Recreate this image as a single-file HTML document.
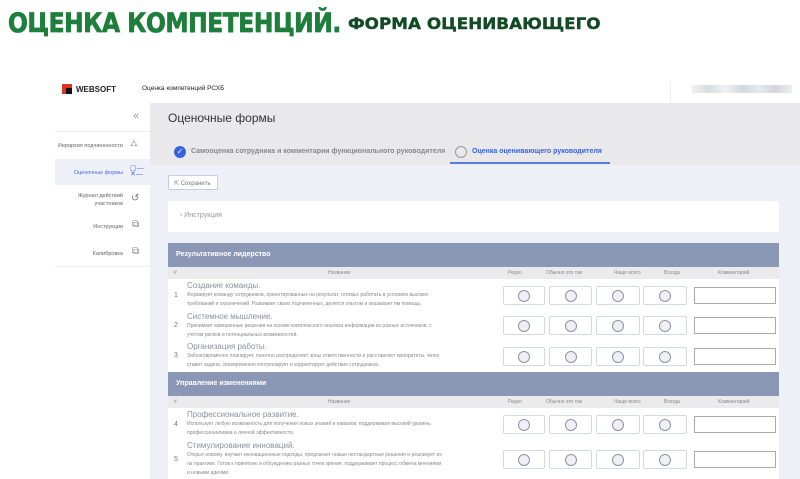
<!DOCTYPE html>
<html><head><meta charset="utf-8"><style>
*{margin:0;padding:0;box-sizing:border-box}
body{width:800px;height:479px;overflow:hidden;background:#fff;font-family:"Liberation Sans","DejaVu Sans",sans-serif;position:relative}
.a{position:absolute}
.t1{left:8px;top:8px;font-size:27px;font-weight:900;color:#1e7f3c;letter-spacing:-0.5px;white-space:nowrap;font-family:"DejaVu Sans","Liberation Sans",sans-serif;transform:scaleX(0.865);transform-origin:0 0;-webkit-text-stroke:0.8px #1e7f3c}
.t2{left:348px;top:14px;font-size:16px;font-weight:900;color:#124a26;white-space:nowrap;font-family:"DejaVu Sans","Liberation Sans",sans-serif;transform:scaleX(1.05);transform-origin:0 0;-webkit-text-stroke:0.4px #124a26}
.sb{font-size:5.5px;color:#666;text-align:right;white-space:nowrap}
.cell{position:absolute;height:19px;border:1px solid #d4d8e2;background:#fff;border-radius:2px}
.cell i{position:absolute;left:50%;top:50%;width:12px;height:12px;margin:-6px 0 0 -6px;border:1.3px solid #8c93a5;border-radius:50%;background:#eef0f5}
.cm{position:absolute;height:17px;border:1px solid #aaa;background:#fff}
.sec{position:absolute;left:168px;width:611px;height:24px;background:#8a97b5;color:#fff;font-size:7px;font-weight:bold;padding:8px 0 0 8px}
.ch{position:absolute;left:168px;width:611px;height:12px;background:#ebebed;font-size:5px;color:#888}
.ch span{position:absolute;top:3px}
.row{position:absolute;left:168px;width:611px;background:#fff}
.n{position:absolute;left:6px;font-size:7px;color:#777}
.h{position:absolute;left:19px;font-size:8px;color:#8a8f9a}
.d{position:absolute;left:19px;font-size:5px;color:#888;line-height:9px;width:255px}
</style></head><body>
<div class="a t1">ОЦЕНКА КОМПЕТЕНЦИЙ.</div>
<div class="a t2">ФОРМА ОЦЕНИВАЮЩЕГО</div>

<div class="a" style="left:62px;top:84px;width:10px;height:10px;background:#d32">
<div class="a" style="left:4px;top:4px;width:6px;height:6px;background:#111"></div></div>
<div class="a" style="left:76px;top:85px;font-size:8px;font-weight:bold;color:#222">WEBSOFT</div>
<div class="a" style="left:142px;top:85px;font-size:6.5px;color:#222">Оценка компетенций РСХБ</div>
<div class="a" style="left:670px;top:81px;width:1px;height:22px;background:#eee"></div>
<div class="a" style="left:692px;top:85px;width:100px;height:8px;background:linear-gradient(90deg,#eef1f2,#d8dde0,#f0f2f4,#d3d8de,#e6e9ec,#d2d6df,#eceef0)"></div>

<div class="a" style="left:55px;top:103px;width:95px;height:376px;background:#fff"></div>
<div class="a" style="left:133px;top:110px;font-size:11px;color:#999">«</div>
<div class="a" style="left:55px;top:131px;width:95px;height:1px;background:#eceef4"></div>
<div class="a" style="left:55px;top:159px;width:95px;height:26px;background:#eef0f8"></div>
<div class="a sb" style="left:55px;top:143px;width:68px">Иерархия подчиненности</div>
<div class="a" style="left:130px;top:138px;font-size:10px;color:#888">⛼</div>
<div class="a sb" style="left:55px;top:170px;width:68px;color:#4a6ae0">Оценочные формы</div>
<div class="a" style="left:130px;top:166px;font-size:7px;color:#4a6ae0;line-height:6px">▢—<br>✕—</div>
<div class="a sb" style="left:55px;top:192px;width:68px;line-height:8px">Журнал действий<br>участников</div>
<div class="a" style="left:131px;top:193px;font-size:10px;color:#777">↺</div>
<div class="a sb" style="left:55px;top:224px;width:68px">Инструкции</div>
<div class="a" style="left:132px;top:219px;font-size:10px;color:#888">⧉</div>
<div class="a sb" style="left:55px;top:251px;width:68px">Калибровка</div>
<div class="a" style="left:132px;top:246px;font-size:10px;color:#888">⧉</div>
<div class="a" style="left:55px;top:266px;width:95px;height:1px;background:#eceef4"></div>

<div class="a" style="left:150px;top:103px;width:650px;height:62px;background:#e9e9eb"></div>
<div class="a" style="left:150px;top:165px;width:650px;height:314px;background:#eef0f8"></div>
<div class="a" style="left:168px;top:111px;font-size:12px;color:#333">Оценочные формы</div>
<div class="a" style="left:174px;top:146px;width:12px;height:12px;border-radius:50%;background:#3a62e0;color:#fff;font-size:8px;text-align:center;line-height:12px">✓</div>
<div class="a" style="left:191px;top:148px;font-size:7px;font-weight:bold;color:#888">Самооценка сотрудника и комментарии функционального руководителя</div>
<div class="a" style="left:455px;top:146px;width:12px;height:12px;border-radius:50%;border:1.2px solid #999"></div>
<div class="a" style="left:472px;top:148px;font-size:7px;font-weight:bold;color:#3a62e0">Оценка оценивающего руководителя</div>
<div class="a" style="left:450px;top:162px;width:160px;height:1.5px;background:#5a7ae0"></div>

<div class="a" style="left:168px;top:175px;width:50px;height:15px;border:1px solid #c8ccd6;background:#fff;border-radius:2px;font-size:6px;color:#777;padding:4px 0 0 5px">⇱ Сохранить</div>
<div class="a" style="left:168px;top:201px;width:611px;height:31px;background:#fff;font-size:7px;color:#999;padding:11px 0 0 12px">› Инструкция</div>

<div class="sec" style="top:243px">Результативное лидерство</div>
<div class="ch" style="top:267px"><span style="left:6px">#</span><span style="left:160px">Название</span><span style="left:340px">Редко</span><span style="left:378px">Обычно это так</span><span style="left:446px">Чаще всего</span><span style="left:496px">Всегда</span><span style="left:550px">Комментарий</span></div>
<div class="row" style="top:279px;height:93px"></div>
<div class="sec" style="top:372px">Управление изменениями</div>
<div class="ch" style="top:396px"><span style="left:6px">#</span><span style="left:160px">Название</span><span style="left:340px">Редко</span><span style="left:378px">Обычно это так</span><span style="left:446px">Чаще всего</span><span style="left:496px">Всегда</span><span style="left:550px">Комментарий</span></div>
<div class="row" style="top:408px;height:71px"></div>

<div class="a" style="left:168px;top:279px;width:340px;height:200px">
<div class="n" style="top:13px">1</div><div class="h" style="top:2px">Создание команды.</div><div class="d" style="top:12px">Формирует команду сотрудников, ориентированных на результат, готовых работать в условиях высоких требований и ограничений. Развивает своих подчиненных, делится опытом и оказывает им помощь.</div>
<div class="n" style="top:43px">2</div><div class="h" style="top:33px">Системное мышление.</div><div class="d" style="top:43px">Принимает взвешенные решения на основе комплексного анализа информации из разных источников, с учётом рисков и потенциальных возможностей.</div>
<div class="n" style="top:73px">3</div><div class="h" style="top:63px">Организация работы.</div><div class="d" style="top:73px">Заблаговременно планирует, понятно распределяет зоны ответственности и расставляет приоритеты, четко ставит задачи, своевременно контролирует и корректирует действия сотрудников.</div>
<div class="n" style="top:142px">4</div><div class="h" style="top:131px">Профессиональное развитие.</div><div class="d" style="top:141px">Использует любую возможность для получения новых знаний и навыков, поддерживая высокий уровень профессионализма и личной эффективности.</div>
<div class="n" style="top:177px">5</div><div class="h" style="top:162px">Стимулирование инноваций.</div><div class="d" style="top:172px">Открыт новому, изучает инновационные подходы, предлагает новые нестандартные решения и реализует их на практике. Готов к принятию и обсуждению разных точек зрения, поддерживает процесс обмена мнениями и новыми идеями.</div>
</div>

<div id="cells"></div>
<script>
var ys=[286,316,347,415,450],xs=[[503,42],[549,43],[596,44],[643,44]],h='';
ys.forEach(function(y){xs.forEach(function(x){h+='<div class="cell" style="left:'+x[0]+'px;top:'+y+'px;width:'+x[1]+'px"><i></i></div>'});h+='<div class="cm" style="left:694px;top:'+(y+1)+'px;width:82px"></div>'});
document.getElementById('cells').innerHTML=h;
</script>
</body></html>
